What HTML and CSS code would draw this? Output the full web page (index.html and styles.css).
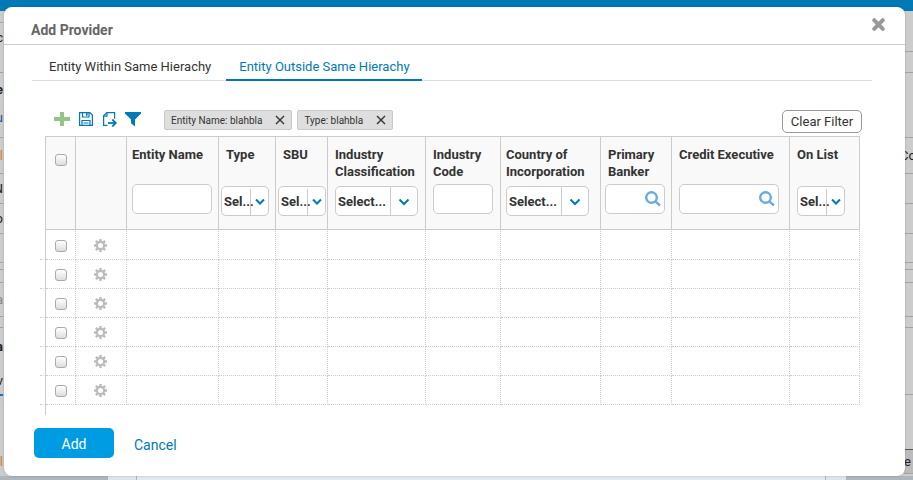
FILE: index.html
```html
<!DOCTYPE html>
<html lang="en">
<head>
<meta charset="utf-8">
<title>Add Provider</title>
<link rel="stylesheet" href="styles.css">
</head>
<body>
<div class="backdrop" aria-hidden="true">
  <div class="appbar"></div>
  <div class="columns">
    <div class="rail rail-left" id="railLeft"></div>
    <div class="rail rail-right" id="railRight"></div>
  </div>
  <div class="page-foot"><div class="sheet"><div class="sheet-body"></div></div></div>
</div>

<main class="modal" role="dialog" aria-labelledby="title">
  <header class="modal-head">
    <h1 id="title">Add Provider</h1>
    <button class="close" type="button" aria-label="Close">
      <svg width="15" height="15" viewBox="0 0 15 15"><path d="M3.2 3.2l8.6 8.6M11.8 3.2l-8.6 8.6" stroke="#999" stroke-width="4" stroke-linecap="round"/></svg>
    </button>
  </header>

  <nav class="tabs">
    <a class="tab" href="#within">Entity Within Same Hierachy</a>
    <a class="tab active" href="#outside">Entity Outside Same Hierachy</a>
  </nav>

  <div class="toolbar">
    <div class="tools">
      <button type="button" aria-label="Add row"><svg width="16" height="16" viewBox="0 0 16 16"><path d="M6 1h4v5h6v4h-6v5H6v-5H0V6h6z" fill="#93c585"/></svg></button>
      <button type="button" aria-label="Save"><svg width="16" height="16" viewBox="0 0 16 16" fill="none" stroke="#007ab5" stroke-width="1.2"><path d="M1.600 1.600h10.300l2.500 2.500v10.300H1.600z"/><path d="M4.500 1.600v4.400h6.500V1.600M4 14.400V9.500h8v4.900M5.500 12h5"/><path d="M8 2h1.600v2.800H8z" fill="#007ab5" stroke="none"/></svg></button>
      <button type="button" aria-label="Export"><svg width="15" height="16" viewBox="0 0 15 16" fill="none" stroke="#007ab5" stroke-width="1.2"><path d="M5.500 14.400H1.600V4.800l3.200-3.200h7.800v6.200"/><path d="M1.600 5.200h3.400V1.600"/><path d="M6 12h7.500" stroke-width="1.800"/><path d="M10.300 8.500l3.500 3.500-3.500 3.500" stroke-width="1.800"/></svg></button>
      <button type="button" aria-label="Filter"><svg width="16" height="16" viewBox="0 0 16 16"><path d="M0 1h16v1.400l-6 6V15.500l-4-3.200V8.400l-6-6z" fill="#007ab5"/></svg></button>
    </div>
    <div class="chips">
      <span class="chip">Entity Name: blahbla <button type="button" aria-label="Remove entity name filter"><svg width="10" height="10" viewBox="0 0 10 10"><path d="M1 1l8 8M9 1L1 9" stroke="#333" stroke-width="1.4"/></svg></button></span>
      <span class="chip">Type: blahbla <button type="button" aria-label="Remove type filter"><svg width="10" height="10" viewBox="0 0 10 10"><path d="M1 1l8 8M9 1L1 9" stroke="#333" stroke-width="1.4"/></svg></button></span>
    </div>
    <button class="clear" type="button">Clear Filter</button>
  </div>

  <div class="grid-wrap">
    <table>
      <colgroup>
        <col class="w-check"><col class="w-gear"><col class="w-name"><col class="w-type"><col class="w-sbu"><col class="w-class"><col class="w-code"><col class="w-country"><col class="w-banker"><col class="w-exec"><col class="w-list">
      </colgroup>
      <thead>
        <tr>
          <th class="check"><input type="checkbox" aria-label="Select all rows"></th>
          <th></th>
          <th class="near"><label for="f-name">Entity Name</label><input class="field wide" id="f-name" type="text"></th>
          <th class="tight"><label for="f-type">Type</label><span class="pick small"><select id="f-type"><option>Sel...</option></select><svg viewBox="0 0 12 8"><path d="M2 1.5l4 4 4-4"/></svg></span></th>
          <th class="tight"><label for="f-sbu">SBU</label><span class="pick small"><select id="f-sbu"><option>Sel...</option></select><svg viewBox="0 0 12 8"><path d="M2 1.5l4 4 4-4"/></svg></span></th>
          <th><label for="f-class">Industry Classification</label><span class="pick"><select id="f-class"><option>Select...</option></select><svg viewBox="0 0 12 8"><path d="M1.5 1.5L6 6l4.500-4.500"/></svg></span></th>
          <th><label for="f-code">Industry<br>Code</label><input class="field" id="f-code" type="text"></th>
          <th class="near"><label for="f-country">Country of Incorporation</label><span class="pick"><select id="f-country"><option>Select...</option></select><svg viewBox="0 0 12 8"><path d="M1.5 1.5L6 6l4.500-4.500"/></svg></span></th>
          <th class="snug"><label for="f-banker">Primary<br>Banker</label><span class="search"><input class="field" id="f-banker" type="text"><svg viewBox="0 0 16 16"><circle cx="6.500" cy="6.500" r="5.300"/><path d="M10.300 10.300l4.700 4.200"/></svg></span></th>
          <th><label for="f-exec">Credit Executive</label><span class="search"><input class="field exec" id="f-exec" type="text"><svg viewBox="0 0 16 16"><circle cx="6.500" cy="6.500" r="5.300"/><path d="M10.300 10.300l4.700 4.200"/></svg></span></th>
          <th><label for="f-list">On List</label><span class="pick small"><select id="f-list"><option>Sel...</option></select><svg viewBox="0 0 12 8"><path d="M2 1.5l4 4 4-4"/></svg></span></th>
        </tr>
      </thead>
      <tbody id="rows"></tbody>
    </table>
  </div>

  <footer class="modal-foot">
    <button class="primary" type="button">Add</button>
    <a class="cancel" href="#cancel">Cancel</a>
  </footer>
</main>
<script src="script.js"></script>
</body>
</html>
```
FILE: styles.css
```css
* { box-sizing: border-box; }

body {
  margin: 0;
  min-height: 100vh;
  position: relative;
  overflow: hidden;
  display: flex;
  background: #ccc;
  color: #333;
  font: 13px/17px Roboto, "Liberation Sans", sans-serif;
}

button { padding: 0; border: 0; background: none; font: inherit; color: inherit; cursor: pointer; }
a { text-decoration: none; }
svg { display: block; fill: none; }

/* Dimmed page behind the dialog */
.backdrop { position: absolute; inset: 0; display: flex; flex-direction: column; overflow: hidden; }
.appbar { flex: none; height: 11px; background: #007ab5; }
.columns { flex: 1; display: flex; justify-content: space-between; min-height: 0; }
.rail { overflow: hidden; }
.rail-left { width: 3px; direction: rtl; }
.rail-right { width: 9px; }
.rail div { display: flex; align-items: center; border-bottom: 1px solid #a3a3a3; color: #222; white-space: nowrap; }
.rail .plain { border-bottom-color: transparent; }
.rail .accent { border-bottom: 2px solid #1d6fb8; }
.rail .link { color: #1b4fa0; }
.rail .warn { color: #d08040; }
.rail .muted { color: #888; }
.rail .strong { font-weight: 700; }
.rail .under { text-indent: -4px; }
.rail .box { background: #bbb; border-top: 1px solid #555; }
.page-foot { flex: none; height: 4px; padding: 0 67px 0 108px; background: #adb5bd; }
.sheet { padding: 0 20px 0 28px; background: #dce5eb; }
.sheet-body { height: 4px; border: solid #aab4bc; border-width: 0 1px; background: #dfe9ef; }

.modal {
  position: relative;
  flex: 1;
  min-width: 0;
  margin: 7px 8px 4px 4px;
  border-radius: 8px;
  background: #fff;
  box-shadow: 0 0 2px rgba(0, 0, 0, .25);
}

.modal-head {
  display: flex;
  justify-content: space-between;
  align-items: center;
  height: 38px;
  padding: 10px 19px 0 27px;
  border-bottom: 1px solid #ccc;
}
.modal-head h1 { margin: 0; font-size: 14px; font-weight: 700; color: #666; }
.close { margin-bottom: 12px; }

.tabs { display: flex; gap: 6px; height: 36px; margin: 0 33px 0 28px; padding-left: 4px; border-bottom: 1px solid #ddd; }
.tab { height: 36px; padding: 13px 12px 0 13px; color: #333; border-bottom: 2px solid transparent; }
.tab:first-child { padding-right: 9px; }
.tab.active { color: #007ab5; border-color: #007ab5; }

.toolbar { display: flex; align-items: flex-start; padding: 29px 43px 3px 50px; }
.tools { display: flex; gap: 8px; padding-top: 1px; }
.chips { display: flex; gap: 5px; margin-left: 23px; }
.chip {
  display: flex;
  align-items: center;
  gap: 13px;
  height: 20px;
  padding: 0 6px;
  border: 1px solid #c8c8c8;
  border-radius: 2px;
  background: #dedede;
  font-size: 10px;
}
.clear {
  width: 80px;
  height: 23px;
  margin-left: auto;
  border: 1px solid #999;
  border-radius: 5px;
  background: #fff;
}

.grid-wrap { margin: 0 45px 0 41px; padding-bottom: 10px; border-left: 1px solid #ccc; }
table { width: 100%; table-layout: fixed; border-collapse: separate; border-spacing: 0; }
.w-check { width: 30px; }
.w-gear { width: 51px; }
.w-name { width: 92px; }
.w-type { width: 57px; }
.w-sbu { width: 52px; }
.w-class { width: 98px; }
.w-code { width: 75px; }
.w-country { width: 100px; }
.w-banker { width: 71px; }
.w-exec { width: 118px; }
.w-list { width: 70px; }

th {
  height: 94px;
  padding: 9px 0 0 7px;
  border: solid #ccc;
  border-width: 1px 1px 1px 0;
  background: #f9f9f9;
  text-align: left;
  vertical-align: top;
}
th.near { padding-left: 5px; }
th.tight { padding-left: 2px; }
th.tight label { padding-left: 5px; }
th.snug { padding-left: 4px; }
th.snug label { padding-left: 3px; }
th label { display: block; height: 34px; }
th.check { padding: 17px 0 0 9px; }

.field {
  display: block;
  width: 60px;
  height: 30px;
  margin-top: 4px;
  padding: 0 6px;
  border: 1px solid #ccc;
  border-radius: 5px;
  background: #fff;
  font: inherit;
}
.field.wide { width: 80px; }
.field.exec { width: 100px; }
.search { display: block; position: relative; width: fit-content; }
.search svg { position: absolute; right: 4px; top: 7px; width: 16px; height: 16px; stroke: #66ace0; stroke-width: 2.4; }

.pick { display: block; position: relative; width: 83px; height: 30px; margin-top: 6px; }
.pick select {
  width: 100%;
  height: 30px;
  padding: 0 0 0 2px;
  appearance: none;
  border: 1px solid #ccc;
  border-radius: 5px;
  background: linear-gradient(#ccc, #ccc) right 26px top 0 / 1px 100% no-repeat #fff;
  color: #333;
  font: inherit;
  font-weight: 700;
}
.pick svg { position: absolute; right: 8px; top: 12px; width: 12px; height: 8px; stroke: #007ab5; stroke-width: 2; }
.pick.small { width: 48px; }
.pick.small select { background-position: right 17px top 2px; }
.pick.small svg { right: 3px; }

input[type="checkbox"] {
  display: block;
  width: 12px;
  height: 12px;
  margin: 0;
  appearance: none;
  border: 1px solid #aaa;
  border-radius: 3px;
  background: linear-gradient(#fff, #ddd);
}

tbody::before { content: ""; display: block; height: 1px; }
td { height: 29px; padding: 0; border: dotted #ccc; border-width: 0 1px 1px 0; }
td:first-child { position: relative; padding: 2px 0 0 9px; }
td:first-child::before { content: ""; position: absolute; left: -6px; bottom: -1px; width: 6px; border-bottom: 1px dotted #ccc; }
td:nth-child(2) { padding-right: 2px; }
td button { display: block; margin: 0 auto; }

.modal-foot { display: flex; align-items: center; gap: 20px; padding: 13px 30px 18px; font-size: 14px; }
.primary { width: 80px; height: 30px; padding-top: 2px; border-radius: 5px; background: #009ce3; color: #fff; }
.cancel { padding-top: 4px; color: #007ab5; }
```
FILE: script.js
```js
var gear = '<svg width="13" height="13" viewBox="0 0 13 13">' +
  '<circle cx="6.5" cy="6.5" r="3.6" stroke="#bbb" stroke-width="2.2"/>' +
  '<path d="M6.5 0v2.400M6.5 10.600V13M0 6.500h2.400M10.600 6.500H13M1.900 1.900l1.700 1.700M9.400 9.400l1.700 1.700M11.100 1.900L9.400 3.600M3.600 9.400l-1.700 1.700" stroke="#bbb" stroke-width="2.400"/></svg>';

var rows = '';
for (var i = 1; i <= 6; i++) {
  rows += '<tr><td><input type="checkbox" aria-label="Select row ' + i + '"></td>' +
    '<td><button type="button" aria-label="Row ' + i + ' settings">' + gear + '</button></td>' +
    '<td></td>'.repeat(9) + '</tr>';
}
document.getElementById('rows').innerHTML = rows;

// Each entry: row height, text, style name
function fill(id, items) {
  document.getElementById(id).innerHTML = items.map(function (r) {
    return '<div class="' + r[2] + '" style="height:' + r[0] + 'px">' + r[1] + '</div>';
  }).join('');
}
fill('railLeft', [
  [12, '', ''], [29, 'c', 'plain'], [21, '', ''], [34, 'e', 'plain strong'], [22, 'u', 'plain link'], [9, '', ''],
  [36, 'l', 'warn'], [30, 'N', ''], [30, 'o', ''], [29, '', ''], [7, '', ''], [13, '', ''],
  [34, 'a', 'muted'], [11, '', ''], [38, 'a', 'plain strong'], [30, 'v', 'accent'], [54, '', 'plain'], [24, 'l', 'plain warn']
]);
fill('railRight', [
  [41, '', ''], [21, '', ''], [65, '', ''], [36, 'Co', 'under'], [30, '', ''], [30, '', ''], [29, '', ''],
  [7, '', ''], [13, '', ''], [34, '', ''], [11, '', ''], [67, '', ''], [54, '', 'plain'], [25, 'e', 'box']
]);
```
